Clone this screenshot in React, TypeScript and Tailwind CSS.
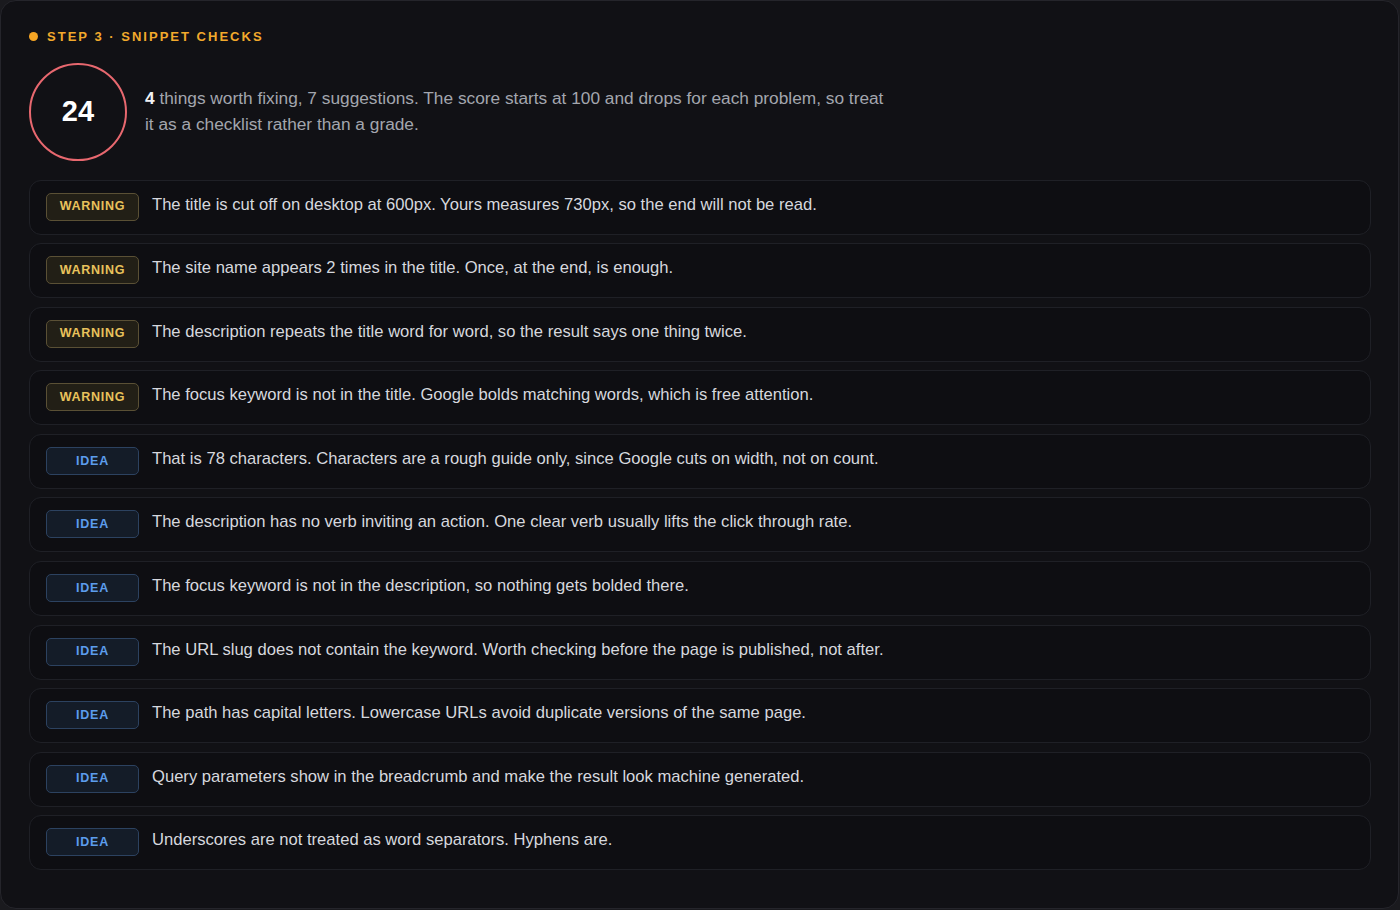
type Level = "warning" | "idea";

const CHECKS: { level: Level; text: string }[] = [
  { level: "warning", text: "The title is cut off on desktop at 600px. Yours measures 730px, so the end will not be read." },
  { level: "warning", text: "The site name appears 2 times in the title. Once, at the end, is enough." },
  { level: "warning", text: "The description repeats the title word for word, so the result says one thing twice." },
  { level: "warning", text: "The focus keyword is not in the title. Google bolds matching words, which is free attention." },
  { level: "idea", text: "That is 78 characters. Characters are a rough guide only, since Google cuts on width, not on count." },
  { level: "idea", text: "The description has no verb inviting an action. One clear verb usually lifts the click through rate." },
  { level: "idea", text: "The focus keyword is not in the description, so nothing gets bolded there." },
  { level: "idea", text: "The URL slug does not contain the keyword. Worth checking before the page is published, not after." },
  { level: "idea", text: "The path has capital letters. Lowercase URLs avoid duplicate versions of the same page." },
  { level: "idea", text: "Query parameters show in the breadcrumb and make the result look machine generated." },
  { level: "idea", text: "Underscores are not treated as word separators. Hyphens are." },
];

function Badge({ level }: { level: Level }) {
  // fixed-width chip so the messages line up in one column
  const tone =
    level === "warning"
      ? "border-[#5a5035] bg-[#221f16] text-[#e9c25c]"
      : "border-[#2c4260] bg-[#141c28] text-[#5c9ded]";
  return (
    <span
      className={`flex h-[28px] w-[93px] shrink-0 items-center justify-center rounded-[5px] border text-[12.5px] font-bold tracking-[0.06em] ${tone}`}
    >
      {level === "warning" ? "WARNING" : "IDEA"}
    </span>
  );
}

export default function App() {
  const fixes = CHECKS.filter((c) => c.level === "warning").length;
  const ideas = CHECKS.length - fixes;

  return (
    <div
      className="min-h-[910px] w-[1400px] bg-[#1a1a1e]"
      style={{ fontFamily: '"Liberation Sans", Arial, sans-serif' }}
    >
      <div className="h-[909px] w-[1399px] rounded-2xl border border-[#25252b] bg-[#111115] px-[28px] pt-[26px]">
        {/* Step label */}
        <div className="flex items-center gap-[9px]">
          <span className="h-[9px] w-[9px] rounded-full bg-[#f5a524]" />
          <span className="text-[13px] font-bold tracking-[0.155em] text-[#f2a92c]">
            STEP 3 · SNIPPET CHECKS
          </span>
        </div>

        {/* Score + summary */}
        <div className="mt-[16px] flex items-start gap-[18px]">
          <div className="flex h-[98px] w-[98px] shrink-0 items-center justify-center rounded-full border-2 border-[#e8686f]">
            <span className="text-[29px] font-bold text-white">24</span>
          </div>
          <p className="mt-[22px] w-[745px] text-[17.3px] leading-[26px] text-[#a3a6ae]">
            <b className="text-[#f1f2f4]">{fixes}</b> things worth fixing, {ideas} suggestions. The score
            starts at 100 and drops for each problem, so treat it as a checklist rather than a grade.
          </p>
        </div>

        {/* Check list */}
        <div className="mt-[19px] flex w-[1342px] flex-col gap-[8.6px]">
          {CHECKS.map((c, i) => (
            <div
              key={i}
              className="flex h-[55px] items-start gap-[13px] rounded-xl border border-[#1f2026] bg-[#0e0e12] px-[16px] pt-[12px]"
            >
              <Badge level={c.level} />
              <span className="text-[16.6px] leading-[24px] text-[#d6d8de]">{c.text}</span>
            </div>
          ))}
        </div>
      </div>
    </div>
  );
}
